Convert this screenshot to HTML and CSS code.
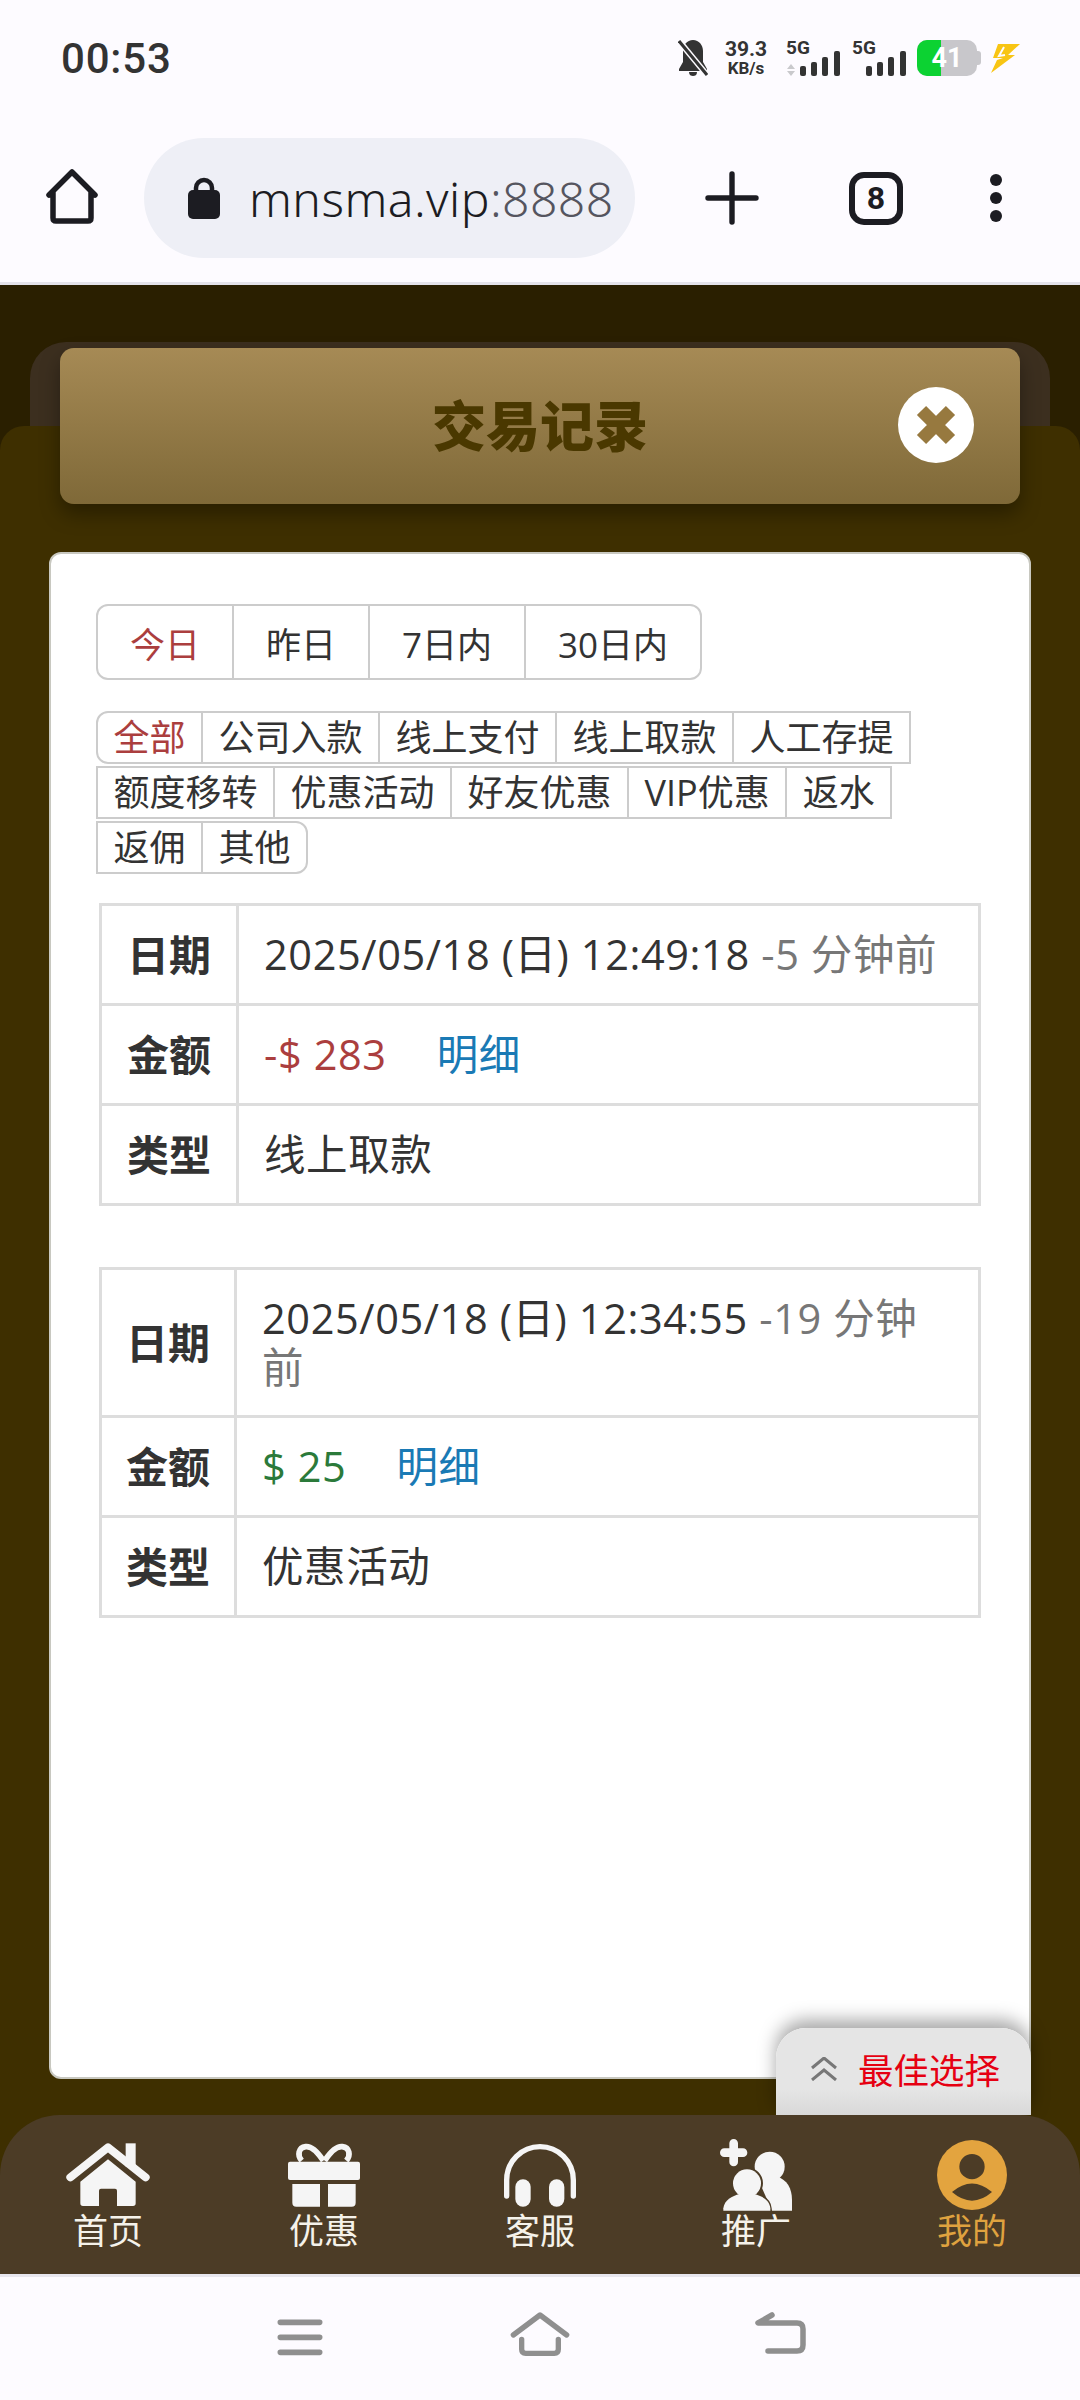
FILE: index.html
```html
<!DOCTYPE html>
<html lang="zh-CN">
<head>
<meta charset="utf-8">
<title>交易记录</title>
<link rel="stylesheet" href="styles.css">
</head>
<body>
<div class="screen">
  <header class="status">
    <span class="clock">00:53</span>
    <div class="status-icons">
      <svg class="bell" viewBox="0 0 30 37" width="30" height="37">
        <path d="M15 1c-6 0-10 5-10 11v11l-4 7v2h28v-2l-4-7V12C25 6 21 1 15 1z" fill="#333"/>
        <path d="M11 33h8c0 3-2 4-4 4s-4-1-4-4z" fill="#333"/>
        <path d="M1 2l28 34" stroke="#fdfbff" stroke-width="6"/>
        <path d="M1 2l28 34" stroke="#333" stroke-width="3"/>
      </svg>
      <div class="speed"><span class="speed-num">39.3</span><span class="speed-unit">KB/s</span></div>
      <svg class="sig" viewBox="0 -8 54 44" width="54" height="44">
        <text class="sig-label" x="0" y="14">5G</text>
        <path d="M5 24l-4 5h8zM5 36l-4-5h8z" fill="#c9c9cc"/>
        <rect x="14" y="26" width="6" height="10" rx="2" fill="#333"/>
        <rect x="25" y="22" width="6" height="14" rx="2" fill="#333"/>
        <rect x="36" y="17" width="6" height="19" rx="2" fill="#333"/>
        <rect x="48" y="11" width="6" height="25" rx="2" fill="#333"/>
      </svg>
      <svg class="sig" viewBox="0 -8 54 44" width="54" height="44">
        <text class="sig-label" x="0" y="14">5G</text>
        <rect x="14" y="26" width="6" height="10" rx="2" fill="#333"/>
        <rect x="25" y="22" width="6" height="14" rx="2" fill="#333"/>
        <rect x="36" y="17" width="6" height="19" rx="2" fill="#333"/>
        <rect x="48" y="11" width="6" height="25" rx="2" fill="#333"/>
      </svg>
      <div class="battery">
        <div class="battery-cell"><div class="battery-fill"></div><span class="battery-num">41</span></div>
        <div class="battery-tip"></div>
      </div>
      <svg class="bolt" viewBox="0 0 30 30" width="30" height="30">
        <path d="M8 1h22L18 12h7L1 30l6-13 6-2H3z" fill="#f8c514"/>
        <path d="M14 4L9 13l6-1" fill="none" stroke="#fdfbff" stroke-width="2"/>
      </svg>
    </div>
  </header>

  <nav class="toolbar">
    <svg class="tool-home" viewBox="0 0 60 60" width="60" height="60">
      <path d="M7 27L30 4l23 23M11 24v26q0 3 3 3h32q3 0 3-3V24" fill="none" stroke="#1c1c22" stroke-width="5.5" stroke-linecap="round" stroke-linejoin="round"/>
    </svg>
    <div class="url-pill">
      <svg class="lock" viewBox="0 0 32 42" width="32" height="42">
        <path d="M8 15V11a8 8 0 0 1 16 0v4" fill="none" stroke="#1c1c22" stroke-width="4.5"/>
        <rect x="0" y="13" width="32" height="29" rx="5" fill="#1c1c22"/>
      </svg>
      <span class="url"><span class="url-host">mnsma.vip</span><span class="url-port">:8888</span></span>
    </div>
    <svg class="tool-plus" viewBox="0 0 60 60" width="60" height="60">
      <path d="M30 6v48M6 30h48" stroke="#1c1c22" stroke-width="5.4" stroke-linecap="round"/>
    </svg>
    <div class="tab-count"><span>8</span></div>
    <svg class="tool-more" viewBox="0 0 12 48" width="12" height="48">
      <circle cx="6" cy="6" r="6" fill="#1c1c22"/>
      <circle cx="6" cy="24" r="6" fill="#1c1c22"/>
      <circle cx="6" cy="42" r="6" fill="#1c1c22"/>
    </svg>
  </nav>

  <main class="page">
    <div class="head-back">
      <div class="head">
        <h1 class="head-title">交易记录</h1>
        <button class="close" aria-label="关闭">
          <svg viewBox="0 0 76 76" width="76" height="76">
            <circle cx="38" cy="38" r="38" fill="#fff"/>
            <path d="M23.500 23.500l29 29M52.500 23.500l-29 29" stroke="#97793f" stroke-width="13"/>
          </svg>
        </button>
      </div>
    </div>

    <div class="sheet">
      <section class="card">
        <div class="tabs">
          <span class="tab is-on">今日</span>
          <span class="tab">昨日</span>
          <span class="tab">7日内</span>
          <span class="tab">30日内</span>
        </div>

        <div class="filters">
          <span class="chip chip-first is-on">全部</span>
          <span class="chip">公司入款</span>
          <span class="chip">线上支付</span>
          <span class="chip">线上取款</span>
          <span class="chip">人工存提</span>
          <span class="chip">额度移转</span>
          <span class="chip">优惠活动</span>
          <span class="chip">好友优惠</span>
          <span class="chip">VIP优惠</span>
          <span class="chip">返水</span>
          <span class="chip">返佣</span>
          <span class="chip chip-last">其他</span>
        </div>

        <table class="record record-a">
          <tr><th>日期</th><td>2025/05/18 (日) 12:49:18 <span class="ago">-5 分钟前</span></td></tr>
          <tr><th>金额</th><td><span class="out">-$ 283</span><a class="detail">明细</a></td></tr>
          <tr><th>类型</th><td>线上取款</td></tr>
        </table>

        <table class="record record-b">
          <tr class="row-tall"><th>日期</th><td>2025/05/18 (日) 12:34:55 <span class="ago">-19 分钟前</span></td></tr>
          <tr><th>金额</th><td><span class="in">$ 25</span><a class="detail">明细</a></td></tr>
          <tr><th>类型</th><td>优惠活动</td></tr>
        </table>
      </section>

      <div class="best">
        <svg viewBox="0 0 28 24" width="28" height="24">
          <path d="M2 11L14 1l12 10M2 23l12-10 12 10" fill="none" stroke="#777" stroke-width="3"/>
        </svg>
        <span>最佳选择</span>
      </div>

      <footer class="tabbar">
        <div class="tabbar-item">
          <svg viewBox="70 57 270 216" width="90" height="72">
            <path d="M92 172L205 82l113 90" fill="none" stroke="#f5f5f5" stroke-width="24" stroke-linecap="round" stroke-linejoin="round"/>
            <rect x="258" y="70" width="30" height="70" fill="#f5f5f5"/>
            <path d="M205 118l83 67v65q0 8-8 8h-48v-46q0-6-6-6h-42q-6 0-6 6v46h-48q-8 0-8-8v-65z" fill="#f5f5f5"/>
          </svg>
          <span>首页</span>
        </div>
        <div class="tabbar-item">
          <svg viewBox="717 57 270 216" width="90" height="72">
            <rect x="744" y="125" width="216" height="55" rx="6" fill="#f5f5f5"/>
            <path d="M757 192h83v68h-71q-12 0-12-12zM864 192h83v56q0 12-12 12h-71z" fill="#f5f5f5"/>
            <path d="M850 122C832 95 812 78 797 80c-22 3-26 26-12 42M854 122c18-27 38-44 53-42 22 3 26 26 12 42" fill="none" stroke="#f5f5f5" stroke-width="17"/>
          </svg>
          <span>优惠</span>
        </div>
        <div class="tabbar-item">
          <svg viewBox="15 57 270 216" width="90" height="72">
            <path d="M50 228V180a100 100 0 0 1 200 0v48" fill="none" stroke="#f5f5f5" stroke-width="16" stroke-linecap="round"/>
            <rect x="76" y="178" width="46" height="82" rx="23" fill="#f5f5f5"/>
            <rect x="177" y="178" width="46" height="82" rx="23" fill="#f5f5f5"/>
          </svg>
          <span>客服</span>
        </div>
        <div class="tabbar-item">
          <svg viewBox="662 57 270 216" width="90" height="72">
            <path d="M730 70v56M702 98h56" stroke="#f5f5f5" stroke-width="26" stroke-linecap="round"/>
            <circle cx="838" cy="140" r="45" fill="#f5f5f5"/>
            <path d="M800 170h60c30 8 45 35 45 70v32h-60z" fill="#f5f5f5"/>
            <circle cx="770" cy="190" r="44" fill="#f5f5f5" stroke="#4c3c26" stroke-width="8"/>
            <path d="M699 272v-7c3-25 26-37 49-43h44c23 6 46 18 48 43v7z" fill="#f5f5f5" stroke="#4c3c26" stroke-width="8"/>
            <circle cx="770" cy="190" r="42" fill="#f5f5f5"/>
            <path d="M699 272v-7c3-25 26-37 49-43h44c23 6 46 18 48 43v7z" fill="#f5f5f5"/>
          </svg>
          <span>推广</span>
        </div>
        <div class="tabbar-item is-on">
          <svg viewBox="1310 57 270 216" width="90" height="72">
            <circle cx="1445" cy="165" r="105" fill="#e3a43f"/>
            <circle cx="1445" cy="140" r="38" fill="#4c3c26"/>
            <path d="M1385 216q60-51 120 0-60 52-120 0z" fill="#4c3c26"/>
          </svg>
          <span>我的</span>
        </div>
      </footer>
    </div>
  </main>

  <div class="sysbar">
    <svg viewBox="30 30 180 180" width="60" height="60">
      <path d="M61 82h118M61 127h118M61 172h118" stroke="#8f8f8f" stroke-width="17" stroke-linecap="round"/>
    </svg>
    <svg viewBox="750 30 180 180" width="60" height="60">
      <path d="M760 120l80-60 80 60" fill="none" stroke="#8f8f8f" stroke-width="16" stroke-linecap="round" stroke-linejoin="round"/>
      <path d="M785 133v30q0 12 12 12h86q12 0 12-12v-30" fill="none" stroke="#8f8f8f" stroke-width="16" stroke-linecap="round"/>
    </svg>
    <svg viewBox="750 2305 60 60" width="60" height="60">
      <path d="M772 2315l-14 8h39q6 0 6 6v16q0 6-6 6h-29" fill="none" stroke="#8f8f8f" stroke-width="5.500" stroke-linecap="round" stroke-linejoin="round"/>
    </svg>
  </div>
</div>
</body>
</html>
```

FILE: styles.css
```css
* { box-sizing: border-box; }

html, body {
  margin: 0;
  padding: 0;
}

body {
  font-family: "Open Sans", "Noto Sans CJK SC", sans-serif;
  color: #333;
}

svg { display: block; flex: none; }

.screen {
  width: 1080px;
  height: 2400px;
  display: flex;
  flex-direction: column;
  overflow: hidden;
  background: #fdfbff;
}

/* phone status bar */
.status {
  height: 114px;
  flex: none;
  display: flex;
  align-items: center;
  justify-content: space-between;
  padding: 2px 60px 0 61px;
}

.clock {
  font-family: Roboto, sans-serif;
  font-size: 42px;
  font-weight: 500;
  color: #333;
  letter-spacing: 0.8px;
}

.status-icons {
  display: flex;
  align-items: flex-end;
  height: 37px;
  margin-top: -2px;
}

.speed {
  display: flex;
  flex-direction: column;
  align-items: center;
  width: 42px;
  margin-left: 17px;
  font-family: Roboto, sans-serif;
  font-weight: 700;
  color: #333;
}

.speed-num { font-size: 21px; line-height: 21px; }
.speed-unit { font-size: 17px; line-height: 16px; }

.sig { margin-left: 19px; }
.sig + .sig { margin-left: 12px; }

.sig-label {
  font-family: Roboto, sans-serif;
  font-size: 19px;
  font-weight: 700;
  fill: #333;
}

.battery {
  display: flex;
  align-items: center;
  margin-left: 11px;
}

.battery-cell {
  position: relative;
  width: 60px;
  height: 36px;
  border-radius: 10px;
  overflow: hidden;
  background: #c8c7cb;
  display: flex;
  align-items: center;
  justify-content: center;
}

.battery-fill {
  position: absolute;
  left: 0;
  top: 0;
  bottom: 0;
  width: 24px;
  background: #0cd232;
}

.battery-num {
  position: relative;
  font-family: Roboto, sans-serif;
  font-size: 27px;
  font-weight: 700;
  color: #fff;
}

.battery-tip {
  width: 4px;
  height: 14px;
  border-radius: 0 3px 3px 0;
  background: #c8c7cb;
}

.bolt { margin-left: 9px; margin-bottom: 3px; }

/* browser toolbar */
.toolbar {
  height: 171px;
  flex: none;
  display: flex;
  align-items: center;
  padding-left: 42px;
  border-bottom: 3px solid #e4e2ea;
}

.url-pill {
  width: 491px;
  height: 120px;
  margin-left: 42px;
  display: flex;
  align-items: center;
  padding-left: 44px;
  border-radius: 60px;
  background: #eeeff6;
}

.url {
  margin-left: 29px;
  font-family: "Noto Sans", sans-serif;
  font-size: 48px;
  font-weight: 300;
  letter-spacing: 0.45px;
  white-space: nowrap;
}

.url-host { color: #1c1c22; }
.url-port { color: #55555f; }

.tool-plus { margin-left: 67px; }

.tab-count {
  width: 54px;
  height: 53px;
  margin-left: 87px;
  display: flex;
  align-items: center;
  justify-content: center;
  border: 6px solid #1c1c22;
  border-radius: 15px;
  font-family: Roboto, sans-serif;
  font-size: 32px;
  font-weight: 700;
  color: #1c1c22;
}

.tool-more { margin-left: 87px; }

/* web page */
.page {
  flex: 1;
  min-height: 0;
  display: flex;
  flex-direction: column;
  padding-top: 57px;
  background: #2a1f00;
}

.head-back {
  position: relative;
  z-index: 2;
  flex: none;
  height: 84px;
  margin: 0 30px;
  padding: 6px 30px 0;
  border-radius: 36px 36px 0 0;
  background: #3c2f1f;
}

.head {
  position: relative;
  height: 156px;
  display: flex;
  align-items: center;
  justify-content: center;
  padding-bottom: 6px;
  border-radius: 14px;
  background: linear-gradient(#a68a55, #7f6938);
  box-shadow: 0 10px 20px rgba(0, 0, 0, 0.35);
}

.head-title {
  margin: 0;
  font-size: 54px;
  font-weight: 900;
  color: #4a3800;
}

.close {
  position: absolute;
  right: 46px;
  top: 39px;
  padding: 0;
  border: 0;
  background: none;
}

.sheet {
  position: relative;
  flex: 1;
  min-height: 0;
  display: flex;
  flex-direction: column;
  border-radius: 24px 24px 0 0;
  background: #3e2f00;
  padding-top: 126px;
}

.card {
  flex: none;
  height: 1527px;
  margin: 0 49px;
  padding: 50px 45px 0;
  border: 2px solid #c8c8c0;
  border-radius: 12px;
  background: #fff;
}

.tabs {
  display: inline-flex;
  height: 76px;
  border: 2px solid #ccc;
  border-radius: 12px;
  vertical-align: top;
}

.tab {
  display: flex;
  align-items: center;
  padding: 0 32px;
  font-size: 35px;
  color: #333;
}

.tab + .tab { border-left: 2px solid #ccc; }

.is-on { color: #ab3e3e; }

.filters {
  display: flex;
  flex-wrap: wrap;
  gap: 2px 0;
  width: 830px;
  margin-top: 31px;
}

.chip {
  display: flex;
  align-items: center;
  height: 53px;
  margin-right: -2px;
  padding: 0 15.500px;
  border: 2px solid #ccc;
  font-size: 36px;
  line-height: 1;
  background: #fff;
}

.chip-first { border-radius: 12px 0 0 12px; }
.chip-last { border-radius: 0 12px 12px 0; }

.record {
  width: 882px;
  margin-left: 3px;
  border-collapse: collapse;
  font-size: 41.500px;
  color: #333;
}

.record-a { margin-top: 29px; }
.record-b { margin-top: 61px; }

.record th,
.record td {
  height: 100px;
  padding: 0 25px;
  border: 3px solid #ddd;
  line-height: 49px;
  font-weight: 400;
}

.record td {
  letter-spacing: 0.6px;
  text-align: left;
}

.record th {
  padding: 0;
  font-size: 42px;
  font-weight: 700;
  text-align: center;
}

.record-a th { width: 137px; }
.record-b th { width: 135px; }
.row-tall th, .row-tall td { height: 148px; }

.ago { color: #777; }
.out { color: #ab3e3e; }
.in { color: #2b7a3a; }

.detail {
  margin-left: 50px;
  color: #1a7ab5;
}

.best {
  position: absolute;
  right: 49px;
  bottom: 159px;
  width: 255px;
  height: 87px;
  display: flex;
  align-items: center;
  padding: 0 0 6px 34px;
  gap: 20px;
  border-radius: 30px 30px 0 0;
  background: linear-gradient(#e5e5e5 70%, #d8d8d8);
  box-shadow: 0 -8px 18px rgba(0, 0, 0, 0.35);
  font-size: 35.500px;
  color: #e60012;
}

.tabbar {
  position: relative;
  z-index: 1;
  height: 159px;
  margin-top: 36px;
  display: grid;
  grid-template-columns: repeat(5, 216px);
  padding-top: 24px;
  border-radius: 60px 60px 0 0;
  background: #4c3c26;
}

.tabbar-item {
  display: flex;
  flex-direction: column;
  align-items: center;
  font-size: 35px;
  line-height: 40px;
  color: #f5f2ea;
}

.tabbar-item.is-on { color: #dfa23f; }

/* phone navigation bar */
.sysbar {
  flex: none;
  height: 126px;
  display: flex;
  justify-content: center;
  gap: 180px;
  padding-top: 28px;
  border-top: 3px solid #e8e6ee;
}
```
